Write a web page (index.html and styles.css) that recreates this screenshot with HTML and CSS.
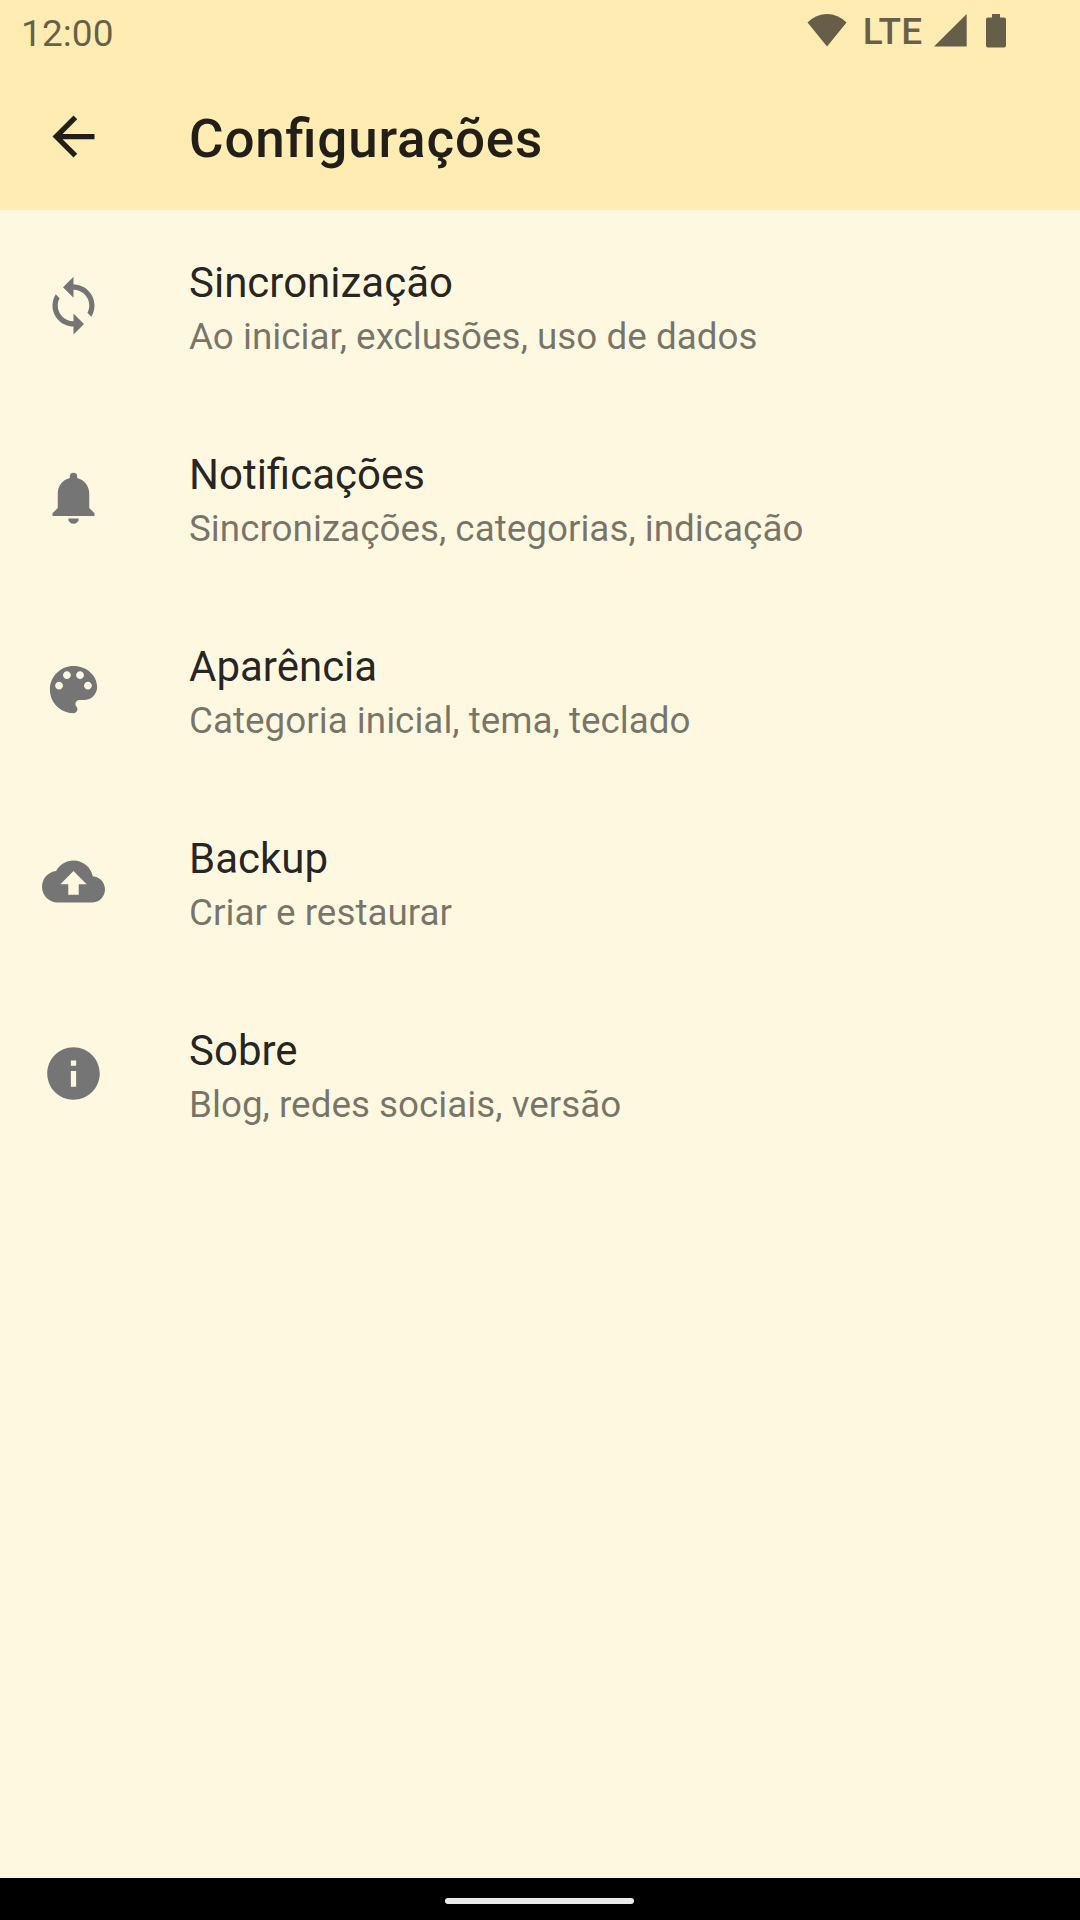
FILE: index.html
```html
<!DOCTYPE html>
<html lang="pt-BR">
<head>
<meta charset="utf-8">
<title>Configurações</title>
<link rel="stylesheet" href="styles.css">
</head>
<body>
<div class="screen">
  <header class="top">
    <div class="status">
      <span class="clock">12:00</span>
      <div class="indicators">
        <svg class="wifi" width="40" height="34" viewBox="0 0 40 34"><path d="M.5 9.500Q9 1 20 1t19.500 8.500L20 33.500z"/></svg>
        <span class="network">LTE</span>
        <svg class="signal" width="33" height="34" viewBox="0 0 33 34"><path d="M0 33.500 32.700 1v32.500z"/></svg>
        <svg class="battery" width="20" height="35" viewBox="0 0 20 35"><path d="M6 1h8v3.500h4a2 2 0 0 1 2 2v26a2 2 0 0 1-2 2H2a2 2 0 0 1-2-2v-26a2 2 0 0 1 2-2h4z"/></svg>
      </div>
    </div>
    <div class="toolbar">
      <svg class="icon back" viewBox="0 0 24 24"><path d="M20 11H7.830l5.590-5.590L12 4l-8 8 8 8 1.410-1.410L7.830 13H20z"/></svg>
      <h1 class="heading">Configurações</h1>
    </div>
  </header>
  <main class="list">
    <div class="row">
      <svg class="icon" viewBox="0 0 24 24"><path d="M12 4V1L8 5l4 4V6c3.310 0 6 2.690 6 6 0 1.010-.25 1.970-.7 2.800l1.460 1.460C19.540 15.030 20 13.570 20 12c0-4.420-3.580-8-8-8zm0 14c-3.310 0-6-2.690-6-6 0-1.010.25-1.970.7-2.800L5.240 7.740C4.460 8.970 4 10.430 4 12c0 4.420 3.580 8 8 8v3l4-4-4-4z"/></svg>
      <div class="text"><span class="title">Sincronização</span><span class="summary">Ao iniciar, exclusões, uso de dados</span></div>
    </div>
    <div class="row">
      <svg class="icon" viewBox="0 0 24 24"><path d="M12 22a2 2 0 0 0 2-2h-4a2 2 0 0 0 2 2zM18 16v-5.500c0-2.900-1.900-5.200-4.600-5.900V4a1.400 1.400 0 0 0-2.800 0v.6C7.900 5.300 6 7.600 6 10.500V16l-2 2v1h16v-1z"/></svg>
      <div class="text"><span class="title">Notificações</span><span class="summary">Sincronizações, categorias, indicação</span></div>
    </div>
    <div class="row">
      <svg class="icon" viewBox="0 0 24 24"><path d="M12 3c-4.970 0-9 4.030-9 9s4.030 9 9 9c.83 0 1.500-.67 1.500-1.500 0-.39-.15-.74-.39-1.010-.23-.26-.38-.61-.38-.99 0-.83.67-1.500 1.500-1.500H16c2.760 0 5-2.240 5-5 0-4.420-4.030-8-9-8zm-5.500 9c-.83 0-1.500-.67-1.500-1.500S5.670 9 6.500 9 8 9.670 8 10.500 7.330 12 6.500 12zm3-4C8.670 8 8 7.330 8 6.500S8.670 5 9.500 5s1.500.67 1.500 1.500S10.330 8 9.500 8zm5 0c-.83 0-1.500-.67-1.500-1.500S13.670 5 14.500 5s1.500.67 1.500 1.500S15.330 8 14.500 8zm3 4c-.83 0-1.500-.67-1.500-1.500S16.670 9 17.500 9s1.500.67 1.500 1.500-.67 1.500-1.500 1.500z"/></svg>
      <div class="text"><span class="title">Aparência</span><span class="summary">Categoria inicial, tema, teclado</span></div>
    </div>
    <div class="row">
      <svg class="icon" viewBox="0 0 24 24"><path d="M19.350 10.040C18.670 6.590 15.640 4 12 4 9.110 4 6.600 5.640 5.350 8.040 2.340 8.360 0 10.910 0 14c0 3.310 2.690 6 6 6h13c2.760 0 5-2.240 5-5 0-2.640-2.050-4.780-4.650-4.960zM14 13v4h-4v-4H7l5-5 5 5h-3z"/></svg>
      <div class="text"><span class="title">Backup</span><span class="summary">Criar e restaurar</span></div>
    </div>
    <div class="row">
      <svg class="icon" viewBox="0 0 24 24"><path d="M12 2C6.480 2 2 6.480 2 12s4.480 10 10 10 10-4.480 10-10S17.520 2 12 2zm1 15h-2v-6h2v6zm0-8h-2V7h2v2z"/></svg>
      <div class="text"><span class="title">Sobre</span><span class="summary">Blog, redes sociais, versão</span></div>
    </div>
  </main>
  <footer class="navbar"><div class="handle"></div></footer>
</div>
</body>
</html>
```
FILE: styles.css
```css
* { box-sizing: border-box; }
body { margin: 0; font-family: Roboto, sans-serif; }
.screen {
  display: flex;
  flex-direction: column;
  width: 1080px;
  height: 1920px;
  background: #fff8e1;
}
.top { height: 210px; background: #ffecb3; }
.status {
  display: flex;
  justify-content: space-between;
  height: 63px;
  padding: 0 74px 0 21px;
  color: rgba(0, 0, 0, 0.6);
  font-size: 37px;
}
.clock { line-height: 67px; letter-spacing: 0.1px; }
.indicators {
  display: flex;
  align-items: flex-start;
  padding-top: 13px;
}
.indicators svg { fill: currentColor; }
.network {
  margin: -13px 11.500px 0 15.500px;
  line-height: 64px;
  font-weight: 500;
  letter-spacing: 0.3px;
}
.battery { margin-left: 19px; }
.toolbar {
  display: flex;
  align-items: center;
  height: 147px;
  padding-left: 42px;
}
.icon {
  flex: none;
  width: 63px;
  height: 63px;
  margin-right: 84px;
  fill: #757575;
}
.row .icon { margin-bottom: 2px; }
.icon.back { fill: rgba(0, 0, 0, 0.87); }
.heading {
  margin: 0;
  padding-top: 5px;
  font-size: 53px;
  font-weight: 500;
  line-height: 62px;
  letter-spacing: 0.8px;
  font-feature-settings: "liga" 1;
  color: rgba(0, 0, 0, 0.87);
}
.list { flex: 1; }
.row {
  display: flex;
  align-items: center;
  height: 192px;
  padding-left: 42px;
}
.text {
  display: flex;
  flex-direction: column;
  padding-top: 6px;
}
.title {
  font-size: 42px;
  line-height: 56px;
  color: rgba(0, 0, 0, 0.87);
}
.summary {
  font-size: 36.850px;
  line-height: 52px;
  color: rgba(0, 0, 0, 0.54);
}
.navbar {
  display: flex;
  justify-content: center;
  height: 42px;
  padding: 20px 2px 0 0;
  background: #000;
}
.handle {
  width: 189px;
  height: 6px;
  border-radius: 3px;
  background: #ebebeb;
}
```
